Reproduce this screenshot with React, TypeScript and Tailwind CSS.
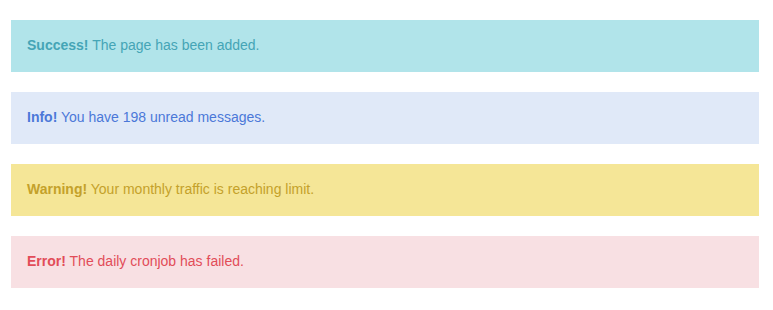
const alerts = [
  { title: 'Success!', text: 'The page has been added.', box: 'bg-[#b1e4ea] text-[#45a5b6]' },
  { title: 'Info!', text: 'You have 198 unread messages.', box: 'bg-[#e0e9f8] text-[#4b78d8]' },
  { title: 'Warning!', text: 'Your monthly traffic is reaching limit.', box: 'bg-[#f5e697] text-[#c4a12a]' },
  { title: 'Error!', text: 'The daily cronjob has failed.', box: 'bg-[#f8e0e3] text-[#e24c58]' },
];

export default function App() {
  return (
    <div className="w-[773px] h-[310px] bg-white pt-5 pl-[11px] pr-[14px] flex flex-col gap-5 font-['Liberation_Sans',Arial,sans-serif]">
      {alerts.map((a) => (
        <div key={a.title} className={`h-[52px] flex items-center px-4 pb-[2px] text-[14px] ${a.box}`}>
          <span>
            <strong className="font-bold">{a.title}</strong> {a.text}
          </span>
        </div>
      ))}
    </div>
  );
}
